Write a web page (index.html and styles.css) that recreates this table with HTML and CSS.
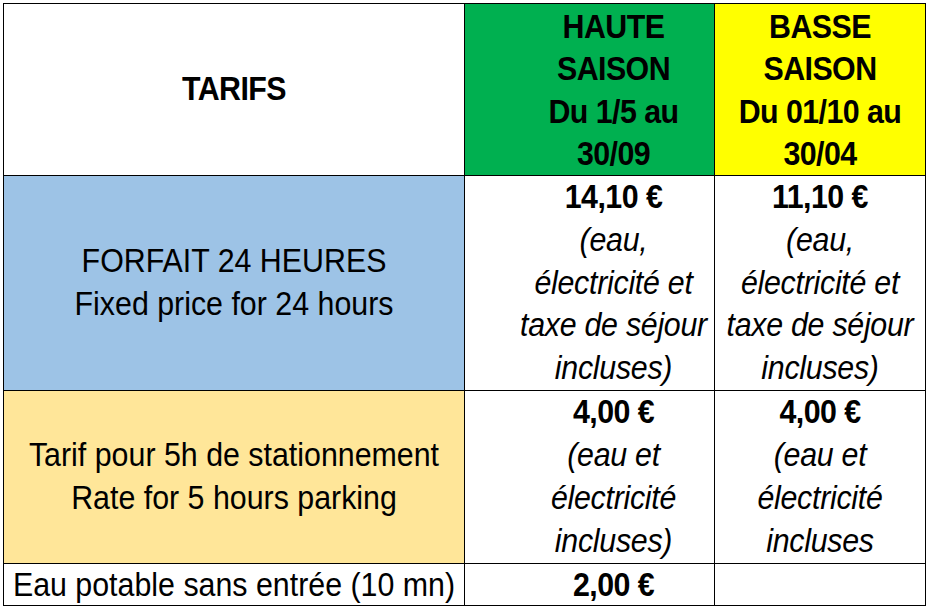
FILE: index.html
```html
<!DOCTYPE html>
<html lang="fr">
<head>
<meta charset="utf-8">
<title>Tarifs</title>
<link rel="stylesheet" href="styles.css">
</head>
<body>
<table class="tarifs">
  <colgroup>
    <col class="c1">
    <col class="c2">
    <col class="c3">
  </colgroup>
  <tr class="r-head">
    <th class="title"><div class="txt">TARIFS</div></th>
    <th class="haute season shift"><div class="txt">HAUTE<br>SAISON<br>Du 1/5 au<br>30/09</div></th>
    <th class="basse season"><div class="txt">BASSE<br>SAISON<br>Du 01/10 au<br>30/04</div></th>
  </tr>
  <tr class="r-forfait">
    <td class="blue"><div class="txt">FORFAIT 24 HEURES<br>Fixed price for 24 hours</div></td>
    <td class="shift"><div class="txt"><span class="price">14,10 €</span><br><span class="note">(eau,<br>électricité et<br>taxe de séjour<br>incluses)</span></div></td>
    <td><div class="txt"><span class="price">11,10 €</span><br><span class="note">(eau,<br>électricité et<br>taxe de séjour<br>incluses)</span></div></td>
  </tr>
  <tr class="r-park">
    <td class="peach"><div class="txt">Tarif pour 5h de stationnement<br>Rate for 5 hours parking</div></td>
    <td class="shift"><div class="txt"><span class="price">4,00 €</span><br><span class="note">(eau et<br>électricité<br>incluses)</span></div></td>
    <td><div class="txt"><span class="price">4,00 €</span><br><span class="note">(eau et<br>électricité<br>incluses</span></div></td>
  </tr>
  <tr class="r-eau">
    <td><div class="txt">Eau potable sans entrée (10 mn)</div></td>
    <td class="shift"><div class="txt"><span class="price">2,00 €</span></div></td>
    <td></td>
  </tr>
</table>
</body>
</html>
```
FILE: styles.css
```css
html, body {
  margin: 0;
  padding: 0;
  background: #ffffff;
}
body {
  padding: 3px 0 0 3px;
  font-family: "Liberation Sans", Arial, sans-serif;
  color: #000000;
}
.tarifs {
  border-collapse: collapse;
  table-layout: fixed;
  width: 923px;
  font-size: 33px;
  line-height: 42.8px;
}
.c1 { width: 461px; }
.c2 { width: 250px; }
.c3 { width: 211px; }
.tarifs th,
.tarifs td {
  border: 1px solid #000000;
  padding: 0;
  text-align: center;
  vertical-align: middle;
  white-space: nowrap;
  overflow: visible;
}
.txt {
  margin: 0 -40px;
  transform: scaleX(0.92);
  transform-origin: 50% 50%;
}
.tarifs th {
  font-weight: bold;
  letter-spacing: -0.6px;
}
.tarifs th.season {
  vertical-align: bottom;
  line-height: 42.2px;
}
.tarifs td.shift,
.tarifs th.shift { padding-left: 48px; }
.r-head th { height: 171px; }
.r-forfait td { height: 213px; }
.r-park td { height: 172px; }
.r-eau td { height: 41px; line-height: 41px; }
.haute { background: #00b050; }
.basse { background: #ffff00; }
.blue { background: #9dc3e6; }
.peach { background: #ffe699; }
.price {
  font-weight: bold;
  letter-spacing: -0.6px;
}
.note {
  font-style: italic;
  letter-spacing: -0.3px;
}
```
